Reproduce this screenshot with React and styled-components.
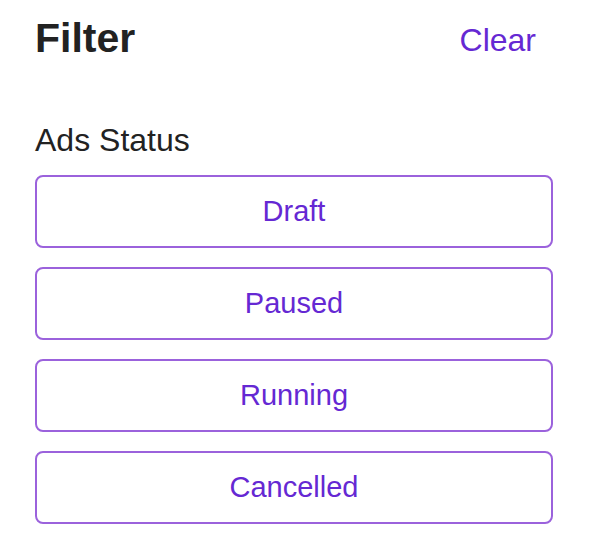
import React, { useState } from 'react';
import styled, { createGlobalStyle } from "styled-components";

const GlobalStyle = createGlobalStyle`
    body {
        margin: 0;
        background: #ffffff;
        font-family: "Liberation Sans", Arial, sans-serif;
    }
`;

const statuses = ["Draft", "Paused", "Running", "Cancelled"];

const App = () => {
    const [selected, setSelected] = useState([]);

    const toggle = (status) => {
        setSelected((prev) =>
            prev.includes(status) ? prev.filter((s) => s !== status) : [...prev, status]
        );
    };

    return (
        <>
            <GlobalStyle />
            <Panel>
                <Header>
                    <Title>Filter</Title>
                    <ClearButton onClick={() => setSelected([])}>Clear</ClearButton>
                </Header>
                <Section>
                    <SectionLabel>Ads Status</SectionLabel>
                    <Options>
                        {statuses.map((status) => (
                            <Option
                                key={status}
                                active={selected.includes(status)}
                                onClick={() => toggle(status)}
                            >
                                {status}
                            </Option>
                        ))}
                    </Options>
                </Section>
            </Panel>
        </>
    );
};

const Panel = styled.div`
    width: 518px;
    padding: 18px 41px 30px 35px;
    display: flex;
    flex-direction: column;
`;

const Header = styled.div`
    display: flex;
    justify-content: space-between;
    align-items: flex-start;
`;

const Title = styled.h1`
    margin: 0;
    font-size: 41px;
    line-height: 1;
    font-weight: 700;
    color: #222222;
`;

const ClearButton = styled.button`
    margin: 6px 17px 0 0;
    padding: 0;
    border: none;
    background: none;
    font-family: inherit;
    font-size: 32px;
    line-height: 1;
    color: #6528d3;
    cursor: pointer;
`;

const Section = styled.div`
    margin-top: 65px;
    display: flex;
    flex-direction: column;
    gap: 19px;
`;

const SectionLabel = styled.div`
    font-size: 32px;
    line-height: 1;
    color: #222222;
`;

const Options = styled.div`
    display: flex;
    flex-direction: column;
    gap: 19px;
`;

const Option = styled.button`
    height: 73px;
    width: 100%;
    border: 2px solid #9b62dc;
    border-radius: 8px;
    background: ${(p) => (p.active ? "#f1e9fc" : "#ffffff")};
    font-family: inherit;
    font-size: 29px;
    line-height: 1;
    color: #6528d3;
    cursor: pointer;
`;

export default App;
